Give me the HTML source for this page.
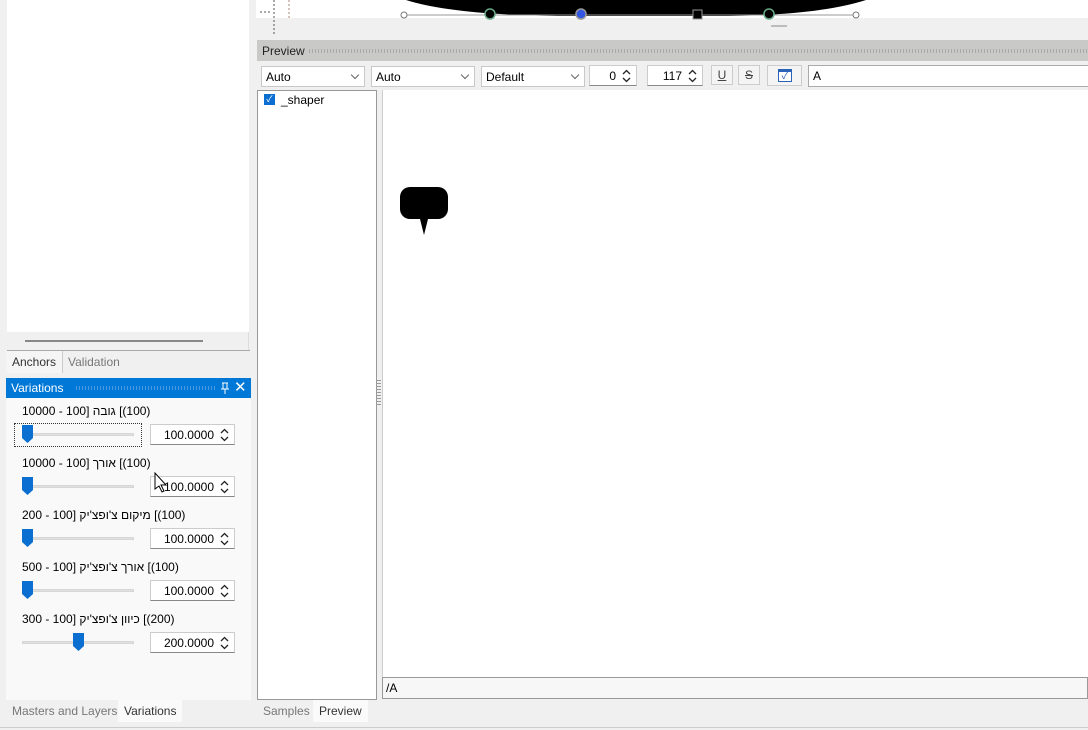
<!DOCTYPE html>
<html><head><meta charset="utf-8"><style>
*{box-sizing:border-box;margin:0;padding:0}
body{width:1088px;height:730px;background:#f0f0f0;font-family:"Liberation Sans","Noto Sans CJK JP",sans-serif;font-size:12px;color:#000;position:relative;overflow:hidden}
.a{position:absolute}
.combo{position:absolute;top:66px;height:21px;background:#fff;border:1px solid #c8c8c8;padding:3px 4px;font-size:12px}
.combo:after{content:"";position:absolute;right:6px;top:5px;width:5px;height:5px;border-right:1px solid #666;border-bottom:1px solid #666;transform:rotate(45deg)}
.spin{position:absolute;height:21px;background:#fff;border:1px solid #ccc;border-bottom-color:#888;text-align:right;padding:3px 20px 0 0;font-size:12px}
.spin svg{position:absolute;right:5px;top:3px}
.lbl{position:absolute;left:22px;font-size:12px;direction:ltr;white-space:nowrap}
.lbl span{display:inline-block;unicode-bidi:isolate}
.track{position:absolute;left:22px;width:112px;height:3px;background:#e0e0e0;border:1px solid #d6d6d6}
.tab{position:absolute;height:22px;padding:4px 6px;font-size:12px;color:#777}
</style></head><body>
<div class="a" style="left:7px;top:0;width:242px;height:332px;background:#fff"></div>
<div class="a" style="left:7px;top:332px;width:242px;height:18px;background:#f0f0f0;border-right:1px solid #ddd"></div>
<div class="a" style="left:25px;top:340px;width:178px;height:2px;background:#888"></div>
<div class="a" style="left:7px;top:350px;width:243px;height:1px;background:#aaa"></div>
<div class="tab" style="left:6px;top:351px;color:#333;background:#f5f5f5;border-right:1px solid #ccc">Anchors</div>
<div class="tab" style="left:62px;top:351px">Validation</div>
<div class="a" style="left:6px;top:378px;width:245px;height:20px;background:#0078d7;color:#fff;padding:3px 5px">Variations
 <span class="a" style="left:70px;top:8px;width:140px;height:4px;background:repeating-linear-gradient(90deg,#4c9be2 0 1px,transparent 1px 3px)"></span>
 <svg class="a" style="left:214px;top:4px" width="10" height="12"><path d="M2 1h6M3 1v6M7 1v6M1 7h8M5 7v5" stroke="#fff" fill="none"/></svg><span class="a" style="left:228px;top:0;font-size:15px">✕</span></div>
<div class="a" style="left:6px;top:398px;width:245px;height:302px;background:#f9f9f9"></div>
<div class="lbl" style="top:404px"><span>10000 - 100</span><span>]</span> <span>גובה</span> <span>[(100)</span></div>
<div class="a" style="left:14px;top:423px;width:128px;height:24px;border:1px dotted #333"></div>
<div class="track" style="top:433px"></div>
<div class="lbl" style="top:456px"><span>10000 - 100</span><span>]</span> <span>אורך</span> <span>[(100)</span></div>
<div class="track" style="top:485px"></div>
<div class="lbl" style="top:508px"><span>200 - 100</span><span>]</span> <span>מיקום צ'ופצ'יק</span> <span>[(100)</span></div>
<div class="track" style="top:537px"></div>
<div class="lbl" style="top:560px"><span>500 - 100</span><span>]</span> <span>אורך צ'ופצ'יק</span> <span>[(100)</span></div>
<div class="track" style="top:589px"></div>
<div class="lbl" style="top:612px"><span>300 - 100</span><span>]</span> <span>כיוון צ'ופצ'יק</span> <span>[(200)</span></div>
<div class="track" style="top:641px"></div>
<div class="spin" style="left:150px;top:424px;width:85px">100.0000<svg width="9" height="14"><path d="M1 5l3.5-3.5L8 5M1 9l3.5 3.5L8 9" stroke="#222" fill="none" stroke-width="1.3"/></svg></div>
<div class="spin" style="left:150px;top:476px;width:85px">100.0000<svg width="9" height="14"><path d="M1 5l3.5-3.5L8 5M1 9l3.5 3.5L8 9" stroke="#222" fill="none" stroke-width="1.3"/></svg></div>
<div class="spin" style="left:150px;top:528px;width:85px">100.0000<svg width="9" height="14"><path d="M1 5l3.5-3.5L8 5M1 9l3.5 3.5L8 9" stroke="#222" fill="none" stroke-width="1.3"/></svg></div>
<div class="spin" style="left:150px;top:580px;width:85px">100.0000<svg width="9" height="14"><path d="M1 5l3.5-3.5L8 5M1 9l3.5 3.5L8 9" stroke="#222" fill="none" stroke-width="1.3"/></svg></div>
<div class="spin" style="left:150px;top:632px;width:85px">200.0000<svg width="9" height="14"><path d="M1 5l3.5-3.5L8 5M1 9l3.5 3.5L8 9" stroke="#222" fill="none" stroke-width="1.3"/></svg></div>
<svg class="a" style="left:0;top:0" width="260" height="700">
<g fill="#0a6fd0"><path d="M22 425h11v13l-5.5 5l-5.5-5z"/><path d="M22 477h11v13l-5.5 5l-5.5-5z"/><path d="M22 529h11v13l-5.5 5l-5.5-5z"/><path d="M22 581h11v13l-5.5 5l-5.5-5z"/><path d="M73 633h11v13l-5.5 5l-5.5-5z"/></g>
<path d="M155 473v16l4-3l3 6l2-1l-3-6h5z" fill="#fff" stroke="#000" stroke-width="1"/>
</svg>
<div class="tab" style="left:6px;top:700px;border-right:1px solid #ccc">Masters and Layers</div>
<div class="tab" style="left:118px;top:700px;background:#fafafa;color:#333">Variations</div>
<div class="a" style="left:256px;top:0;width:832px;height:18px;background:#fff"></div>
<svg class="a" style="left:256px;top:0" width="832" height="36">
<path d="M150 0 Q200 16 320 16 L460 16 Q560 16 610 0z" fill="#000"/>
<line x1="148" y1="15" x2="600" y2="15" stroke="#999"/>
<g fill="#fff" stroke="#777"><circle cx="148" cy="15" r="3"/><circle cx="600" cy="15" r="3"/></g>
<circle cx="234" cy="14" r="5" fill="#000" stroke="#6a8" stroke-width="1.5"/>
<circle cx="325" cy="14" r="5" fill="#3357e0" stroke="#999" stroke-width="1.5"/>
<rect x="437" y="10" width="9" height="9" fill="#000" stroke="#999"/>
<circle cx="513" cy="14" r="5" fill="#000" stroke="#6a8" stroke-width="1.5"/>
<line x1="515" y1="26" x2="531" y2="26" stroke="#888"/>
<path d="M18 0v36M4 12h12" stroke="#555" stroke-dasharray="2 2"/><path d="M33 0v18" stroke="#a87" stroke-dasharray="2 2"/>
</svg>
<div class="a" style="left:257px;top:40px;width:831px;height:21px;background:#c9c9c7;padding:4px 5px;color:#222">Preview
<span class="a" style="left:52px;top:9px;width:780px;height:4px;background:repeating-linear-gradient(90deg,#aaa 0 1px,transparent 1px 3px)"></span></div>
<div class="combo" style="left:261px;width:104px">Auto</div>
<div class="combo" style="left:371px;width:104px">Auto</div>
<div class="combo" style="left:481px;width:104px">Default</div>
<div class="spin" style="left:589px;top:65px;width:48px">0<svg width="9" height="14"><path d="M1 5l3.5-3.5L8 5M1 9l3.5 3.5L8 9" stroke="#222" fill="none" stroke-width="1.3"/></svg></div>
<div class="spin" style="left:647px;top:65px;width:56px">117<svg width="9" height="14"><path d="M1 5l3.5-3.5L8 5M1 9l3.5 3.5L8 9" stroke="#222" fill="none" stroke-width="1.3"/></svg></div>
<div class="a" style="left:711px;top:65px;width:22px;height:20px;border:1px solid #ccc;background:#f4f4f4;text-align:center;text-decoration:underline;padding-top:2px;color:#444">U</div>
<div class="a" style="left:738px;top:65px;width:22px;height:20px;border:1px solid #ccc;background:#f4f4f4;text-align:center;text-decoration:line-through;padding-top:2px;color:#444;font-weight:normal">S</div>
<div class="a" style="left:767px;top:65px;width:35px;height:21px;border:1px solid #ccc;background:#f4f4f4"><span class="a" style="left:10px;top:3px;width:14px;height:13px;border:1px solid #2a62b8;border-top-width:3px;background:#fff;color:#2a62b8;font-size:10px;line-height:9px;text-align:center">✓</span></div>
<div class="a" style="left:808px;top:65px;width:290px;height:22px;background:#fff;border:1px solid #aaa;padding:3px 4px">A</div>
<div class="a" style="left:257px;top:90px;width:120px;height:610px;background:#fff;border:1px solid #999"></div>
<div class="a" style="left:264px;top:94px;width:11px;height:11px;background:#0a6fd0;color:#fff;font-size:9px;line-height:11px;text-align:center">✓</div>
<div class="a" style="left:281px;top:93px">_shaper</div>
<div class="a" style="left:377px;top:380px;width:4px;height:26px;background:repeating-linear-gradient(#999 0 1px,transparent 1px 3px)"></div>
<div class="a" style="left:382px;top:90px;width:706px;height:587px;background:#fff;border-left:1px solid #ccc"></div>
<svg class="a" style="left:398px;top:185px" width="56" height="52"><path d="M12 2h28a10 10 0 0 1 10 10v12a10 10 0 0 1-10 10h-10l-4 16l-4-16h-10a10 10 0 0 1-10-10v-12a10 10 0 0 1 10-10z" fill="#000"/></svg>
<div class="a" style="left:382px;top:677px;width:706px;height:22px;background:#f7f7f7;border:1px solid #999;padding:3px 3px">/A</div>
<div class="tab" style="left:257px;top:700px;border-right:1px solid #ccc">Samples</div>
<div class="tab" style="left:313px;top:700px;background:#fafafa;color:#333">Preview</div>
<div class="a" style="left:0;top:727px;width:1088px;height:1px;background:#ccc"></div>
</body></html>
